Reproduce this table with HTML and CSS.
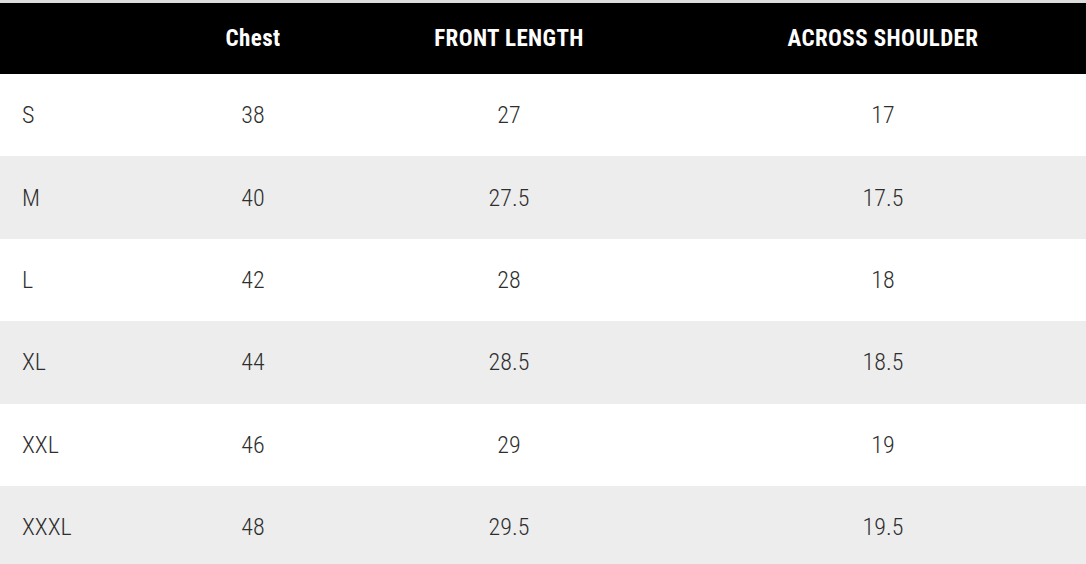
FILE: index.html
```html
<!DOCTYPE html>
<html lang="en">
<head>
<meta charset="utf-8">
<title>Size chart</title>
<link rel="stylesheet" href="styles.css">
</head>
<body>
<div class="page">
  <table class="chart">
    <colgroup>
      <col class="c-size">
      <col class="c-chest">
      <col class="c-front">
      <col class="c-shoulder">
    </colgroup>
    <thead>
      <tr>
        <th class="first"></th>
        <th>Chest</th>
        <th>FRONT LENGTH</th>
        <th>ACROSS SHOULDER</th>
      </tr>
    </thead>
    <tbody>
      <tr><td class="first">S</td><td>38</td><td>27</td><td>17</td></tr>
      <tr><td class="first">M</td><td>40</td><td>27.5</td><td>17.5</td></tr>
      <tr><td class="first">L</td><td>42</td><td>28</td><td>18</td></tr>
      <tr><td class="first">XL</td><td>44</td><td>28.5</td><td>18.5</td></tr>
      <tr><td class="first">XXL</td><td>46</td><td>29</td><td>19</td></tr>
      <tr><td class="first">XXXL</td><td>48</td><td>29.5</td><td>19.5</td></tr>
    </tbody>
  </table>
</div>
</body>
</html>
```

FILE: styles.css
```css
html, body {
  margin: 0;
  padding: 0;
  background: #ffffff;
}

.page {
  border-top: 3px solid #dcdcdc;
  font-family: "Roboto Condensed", "Roboto", "Liberation Sans", sans-serif;
  font-stretch: condensed;
}

.chart {
  width: 100%;
  border-collapse: collapse;
  table-layout: fixed;
}

.c-size { width: 168px; }
.c-chest { width: 170px; }
.c-front { width: 342px; }
.c-shoulder { width: auto; }

.chart thead tr {
  background: #000000;
  height: 71px;
}

.chart th {
  color: #ffffff;
  font-weight: 700;
  font-size: 23px;
  letter-spacing: 0.4px;
  text-align: center;
  padding: 0;
}

.chart tbody tr {
  height: 82.4px;
}

.chart tbody tr:nth-child(even) {
  background: #ecedec;
}

.chart td {
  color: #2e2e2e;
  font-size: 24px;
  font-weight: 350;
  text-align: center;
  padding: 0;
}

.chart td.first {
  text-align: left;
  padding-left: 22px;
}
```
